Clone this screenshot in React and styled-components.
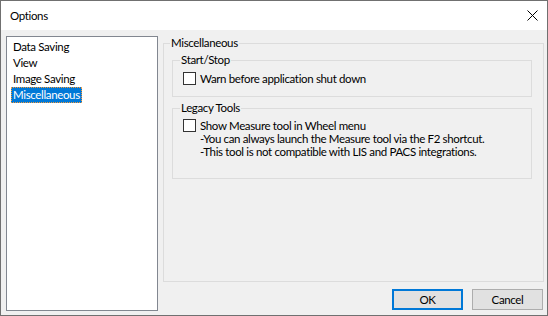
import React from "react";
import styled, { createGlobalStyle } from "styled-components";

const pages = ["Data Saving", "View", "Image Saving", "Miscellaneous"];

const GlobalStyle = createGlobalStyle`
	html, body {
		margin: 0;
		padding: 0;
		background: #f0f0f0;
	}
	body {
		font-family: Lato, "Liberation Sans", sans-serif;
		font-size: 11.5px;
		letter-spacing: -0.35px;
		color: #000;
	}
`;

const Window = styled.div`
	width: 548px;
	height: 316px;
	box-sizing: border-box;
	border: 1px solid #707070;
	display: flex;
	flex-direction: column;
	background: #f0f0f0;
`;

const TitleBar = styled.div`
	height: 29px;
	flex: none;
	background: #fff;
	display: flex;
	align-items: center;
	justify-content: space-between;
	padding-left: 9px;
	line-height: 15px;
`;

const CloseBox = styled.div`
	width: 30px;
	height: 29px;
	display: flex;
	align-items: center;
	justify-content: center;
`;

const Body = styled.div`
	flex: 1;
	display: flex;
	padding: 6px 3px 4px 5px;
	min-height: 0;
`;

const PageList = styled.ul`
	width: 152px;
	flex: none;
	box-sizing: border-box;
	margin: 0;
	padding: 2px 0 0 4px;
	list-style: none;
	background: #fff;
	border: 1px solid #828790;
`;

const PageItem = styled.li`
	height: 16px;
	line-height: 16px;
`;

const PageLabel = styled.span`
	display: inline-block;
	padding: 0 2px;
	height: 16px;
	box-sizing: border-box;
	background: ${(p) => (p.$selected ? "#0078d7" : "transparent")};
	color: ${(p) => (p.$selected ? "#fff" : "#000")};
	outline: ${(p) => (p.$selected ? "1px dotted #f59a3a" : "none")};
	outline-offset: -1px;
`;

const RightColumn = styled.div`
	flex: 1;
	display: flex;
	flex-direction: column;
	margin-left: 5px;
	min-width: 0;
`;

const GroupBox = styled.fieldset`
	margin: ${(p) => p.$gap || 0}px 0 0 0;
	padding: ${(p) => p.$pad};
	border: 1px solid #dcdcdc;
	min-width: 0;
	flex: ${(p) => (p.$grow ? 1 : "none")};
`;

const GroupTitle = styled.legend`
	padding: 0 1px;
	margin-left: ${(p) => p.$shift}px;
	line-height: 14px;
	height: 14px;
`;

const CheckRow = styled.label`
	display: flex;
	align-items: ${(p) => (p.$top ? "flex-start" : "center")};
	line-height: ${(p) => p.$lh}px;
	height: ${(p) => p.$lh}px;
`;

const Box = styled.span`
	width: 13px;
	height: 13px;
	box-sizing: border-box;
	border: 1px solid #333;
	background: #fff;
	flex: none;
	margin-right: 4px;
`;

const Note = styled.div`
	padding-left: 17px;
	line-height: 13px;
	height: 13px;
`;

const ButtonRow = styled.div`
	display: flex;
	justify-content: flex-end;
	gap: 9px;
	margin-top: 7px;
	padding: 0 1px 1px 0;
`;

const Button = styled.button`
	width: 71px;
	height: 21px;
	box-sizing: border-box;
	padding: 0;
	margin: 0;
	font: inherit;
	letter-spacing: inherit;
	color: #000;
	background: #e1e1e1;
	border: ${(p) => (p.$default ? "2px solid #0078d7" : "1px solid #adadad")};
	line-height: 15px;
`;

function CloseIcon() {
	return (
		<svg width="11" height="11" viewBox="0 0 11 11">
			<path d="M0.5 0.5 L10.5 10.5 M10.5 0.5 L0.5 10.5" stroke="#000" strokeWidth="1" />
		</svg>
	);
}

export default function App() {
	return (
		<>
			<GlobalStyle />
			<Window>
				<TitleBar>
					<span>Options</span>
					<CloseBox>
						<CloseIcon />
					</CloseBox>
				</TitleBar>
				<Body>
					<PageList>
						{pages.map((p) => (
							<PageItem key={p}>
								<PageLabel $selected={p === "Miscellaneous"}>{p}</PageLabel>
							</PageItem>
						))}
					</PageList>
					<RightColumn>
						<GroupBox $grow $pad="3px 11px 0 8px">
							<GroupTitle $shift={-2}>Miscellaneous</GroupTitle>
							<GroupBox $pad="4px 8px 10px 10px">
								<GroupTitle $shift={-3}>Start/Stop</GroupTitle>
								<CheckRow $lh={15}>
									<Box />
									Warn before application shut down
								</CheckRow>
							</GroupBox>
							<GroupBox $gap={4} $pad="4px 8px 20px 10px">
								<GroupTitle $shift={-3}>Legacy Tools</GroupTitle>
								<CheckRow $lh={13} $top>
									<Box />
									Show Measure tool in Wheel menu
								</CheckRow>
								<Note>-You can always launch the Measure tool via the F2 shortcut.</Note>
								<Note>-This tool is not compatible with LIS and PACS integrations.</Note>
							</GroupBox>
						</GroupBox>
						<ButtonRow>
							<Button $default>OK</Button>
							<Button>Cancel</Button>
						</ButtonRow>
					</RightColumn>
				</Body>
			</Window>
		</>
	);
}
